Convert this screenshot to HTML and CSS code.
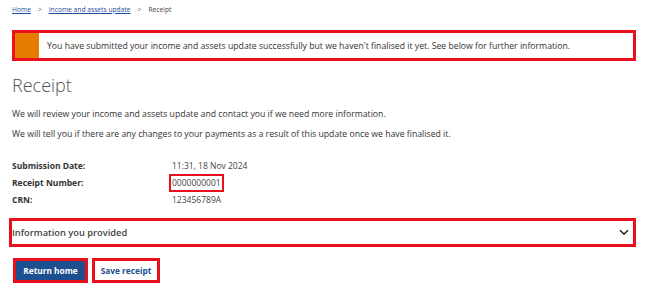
FILE: index.html
```html
<!DOCTYPE html>
<html lang="en">
<head>
<meta charset="utf-8">
<title>Receipt</title>
<link rel="stylesheet" href="styles.css">
</head>
<body>
<main class="page">
  <nav class="breadcrumb">
    <a href="#" class="crumb-link">Home</a>
    <span class="sep">&gt;</span>
    <a href="#" class="crumb-link">Income and assets update</a>
    <span class="sep">&gt;</span>
    <span class="crumb-current">Receipt</span>
  </nav>

  <div class="alert">
    <div class="alert-bar"></div>
    <p class="alert-text">You have submitted your income and assets update successfully but we haven't finalised it yet. See below for further information.</p>
  </div>

  <h1 class="title">Receipt</h1>
  <p class="para">We will review your income and assets update and contact you if we need more information.</p>
  <p class="para">We will tell you if there are any changes to your payments as a result of this update once we have finalised it.</p>

  <dl class="details">
    <dt class="label">Submission Date:</dt>
    <dd class="value">11:31, 18 Nov 2024</dd>
    <dt class="label">Receipt Number:</dt>
    <dd class="value"><span class="hl">0000000001</span></dd>
    <dt class="label">CRN:</dt>
    <dd class="value">123456789A</dd>
  </dl>

  <div class="accordion">
    <span class="acc-title">Information you provided</span>
    <svg class="chev" width="10" height="7" viewBox="0 0 10 7"><path d="M1 1.2 L5 5.2 L9 1.2" fill="none" stroke="#222" stroke-width="1.6"/></svg>
  </div>

  <div class="actions">
    <button class="btn btn-primary">Return home</button>
    <button class="btn btn-secondary">Save receipt</button>
  </div>
</main>
</body>
</html>
```

FILE: styles.css
```css
* { box-sizing: border-box; }
html, body { margin: 0; padding: 0; background: #fff; }
body {
  font-family: "Open Sans", "Noto Sans", sans-serif;
  color: #333;
}
.page {
  width: 650px;
  padding: 3px 14px 0 12px;
}
.breadcrumb {
  display: flex;
  align-items: center;
  gap: 7px;
  font-size: 6.7px;
  height: 12px;
  color: #444;
}
.crumb-link { color: #1f4f9a; text-decoration: underline; }
.sep { color: #666; }
.alert {
  margin-top: 15px;
  display: flex;
  align-items: center;
  border: 3px solid #e8101c;
  height: 31px;
  padding: 0;
}
.alert-bar {
  width: 24px;
  align-self: stretch;
  background: #e57c00;
  margin-right: 8px;
}
.alert-text {
  margin: 0;
  font-size: 8.7px;
  color: #333;
  white-space: nowrap;
}
.title {
  margin: 8px 0 0;
  font-size: 18px;
  font-weight: 300;
  color: #555;
  line-height: 32px;
}
.para {
  font-size: 8.7px;
  margin: 7px 0 0;
  line-height: 12px;
  color: #333;
}
.para + .para { margin-top: 8px; }
.details {
  margin: 20px 0 0;
  display: grid;
  grid-template-columns: 160px auto;
  row-gap: 5px;
  font-size: 8.5px;
  line-height: 12px;
}
.label { font-weight: 700; color: #333; }
.value { margin: 0; color: #444; }
.hl {
  display: inline-block;
  outline: 2px solid #e8101c;
  outline-offset: 1px;
  line-height: 12px;
}
.accordion {
  margin: 12px 0 0 -3px;
  height: 29px;
  border: 3px solid #e8101c;
  display: flex;
  align-items: center;
  justify-content: space-between;
  padding: 0 3px 0 0;
}
.acc-title {
  font-size: 9.3px;
  font-weight: 600;
  color: #444;
}
.chev { margin-right: 1px; }
.actions {
  margin-top: 11px;
  display: flex;
  gap: 4px;
  margin-left: 1px;
}
.btn {
  font-family: inherit;
  font-size: 8.3px;
  font-weight: 700;
  height: 25px;
  border: 3px solid #e8101c;
  padding: 0;
}
.btn-primary {
  width: 75px;
  background: #1d4f91;
  color: #fff;
  box-shadow: inset 0 0 0 1px #1d4f91;
}
.btn-secondary {
  width: 68px;
  background: #fff;
  color: #1d4f91;
}
```
